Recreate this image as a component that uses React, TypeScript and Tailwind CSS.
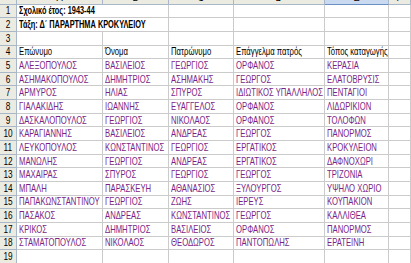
import { Fragment } from 'react'

const cols = ['A', 'B', 'C', 'D', 'E', 'F']

const rows: string[][] = [
  ['ΑΛΕΞΟΠΟΥΛΟΣ', 'ΒΑΣΙΛΕΙΟΣ', 'ΓΕΩΡΓΙΟΣ', 'ΟΡΦΑΝΟΣ', 'ΚΕΡΑΣΙΑ'],
  ['ΑΣΗΜΑΚΟΠΟΥΛΟΣ', 'ΔΗΜΗΤΡΙΟΣ', 'ΑΣΗΜΑΚΗΣ', 'ΓΕΩΡΓΟΣ', 'ΕΛΑΤΟΒΡΥΣΙΣ'],
  ['ΑΡΜΥΡΟΣ', 'ΗΛΙΑΣ', 'ΣΠΥΡΟΣ', 'ΙΔΙΩΤΙΚΟΣ ΥΠΑΛΛΗΛΟΣ', 'ΠΕΝΤΑΓΙΟΙ'],
  ['ΓΙΑΛΑΚΙΔΗΣ', 'ΙΩΑΝΝΗΣ', 'ΕΥΑΓΓΕΛΟΣ', 'ΟΡΦΑΝΟΣ', 'ΛΙΔΩΡΙΚΙΟΝ'],
  ['ΔΑΣΚΑΛΟΠΟΥΛΟΣ', 'ΓΕΩΡΓΙΟΣ', 'ΝΙΚΟΛΑΟΣ', 'ΟΡΦΑΝΟΣ', 'ΤΟΛΟΦΩΝ'],
  ['ΚΑΡΑΓΙΑΝΝΗΣ', 'ΒΑΣΙΛΕΙΟΣ', 'ΑΝΔΡΕΑΣ', 'ΓΕΩΡΓΟΣ', 'ΠΑΝΟΡΜΟΣ'],
  ['ΛΕΥΚΟΠΟΥΛΟΣ', 'ΚΩΝΣΤΑΝΤΙΝΟΣ', 'ΓΕΩΡΓΙΟΣ', 'ΕΡΓΑΤΙΚΟΣ', 'ΚΡΟΚΥΛΕΙΟΝ'],
  ['ΜΑΝΩΛΗΣ', 'ΓΕΩΡΓΙΟΣ', 'ΑΝΔΡΕΑΣ', 'ΕΡΓΑΤΙΚΟΣ', 'ΔΑΦΝΟΧΩΡΙ'],
  ['ΜΑΧΑΙΡΑΣ', 'ΣΠΥΡΟΣ', 'ΓΕΩΡΓΙΟΣ', 'ΓΕΩΡΓΟΣ', 'ΤΡΙΖΟΝΙΑ'],
  ['ΜΠΑΛΗ', 'ΠΑΡΑΣΚΕΥΗ', 'ΑΘΑΝΑΣΙΟΣ', 'ΞΥΛΟΥΡΓΟΣ', 'ΥΨΗΛΟ ΧΩΡΙΟ'],
  ['ΠΑΠΑΚΩΝΣΤΑΝΤΙΝΟΥ', 'ΓΕΩΡΓΙΟΣ', 'ΖΩΗΣ', 'ΙΕΡΕΥΣ', 'ΚΟΥΠΑΚΙΟΝ'],
  ['ΠΑΣΑΚΟΣ', 'ΑΝΔΡΕΑΣ', 'ΚΩΝΣΤΑΝΤΙΝΟΣ', 'ΓΕΩΡΓΟΣ', 'ΚΑΛΛΙΘΕΑ'],
  ['ΚΡΙΚΟΣ', 'ΔΗΜΗΤΡΙΟΣ', 'ΒΑΣΙΛΕΙΟΣ', 'ΟΡΦΑΝΟΣ', 'ΠΑΝΟΡΜΟΣ'],
  ['ΣΤΑΜΑΤΟΠΟΥΛΟΣ', 'ΝΙΚΟΛΑΟΣ', 'ΘΕΟΔΩΡΟΣ', 'ΠΑΝΤΟΠΩΛΗΣ', 'ΕΡΑΤΕΙΝΗ'],
]

const headers = ['Επώνυμο', 'Όνομα', 'Πατρώνυμο', 'Επάγγελμα πατρός', 'Τόπος καταγωγής']

// one sheet row: row number + 6 cells
type Cell = { text?: string; bold?: boolean; purple?: boolean; spill?: boolean }

function Txt({ c }: { c: Cell }) {
  if (!c.text) return null
  return (
    <span
      className={`inline-block origin-left ${c.bold ? 'scale-x-[0.67] font-bold' : 'scale-x-[0.7]'} ${
        c.purple ? 'text-[#7a1f86]' : 'text-black'
      }`}
    >
      {c.text}
    </span>
  )
}

function SheetRow({ n, cells }: { n: number; cells: Cell[] }) {
  return (
    <>
      <div className="flex items-center justify-center border-r border-b border-[#a9b8c9] bg-[#ecebe2] text-black">
        <span className="inline-block scale-x-[0.75]">{n}</span>
      </div>
      {cells.map((c, i) => (
        <div
          key={i}
          className={`relative flex items-center whitespace-nowrap border-b border-[#cbcbcb] bg-white pl-[2px] ${
            c.spill ? 'z-10 overflow-visible' : 'overflow-hidden border-r'
          }`}
        >
          <Txt c={c} />
        </div>
      ))}
    </>
  )
}

export default function App() {
  const empty: Cell[] = [{}, {}, {}, {}, {}, {}]
  return (
    <div className="h-[263px] w-[411px] overflow-hidden bg-white font-['Liberation_Sans',Arial,sans-serif] text-[11px] leading-none">
      <div className="-mt-[9px] grid grid-cols-[17px_86px_66px_65px_91px_64px_1fr] auto-rows-[13.65px]">
        {/* column headers, cropped at the top */}
        <div className="border-r border-b border-[#a9b8c9] bg-[#ecebe2]" />
        {cols.map((l) => (
          <div
            key={l}
            className={`flex items-center justify-center border-r border-b ${
              l === 'E'
                ? 'border-[#a9b8c9] border-b-[#6b8fc2] bg-[#c9d9ef]'
                : 'border-[#a9b8c9] bg-[#ecebe2]'
            }`}
          >
            <span className="inline-block scale-x-[0.85]">{l}</span>
          </div>
        ))}

        <SheetRow n={1} cells={[{ text: 'Σχολικό έτος: 1943-44', bold: true, spill: true }, {}, {}, {}, {}, {}]} />
        <SheetRow
          n={2}
          cells={[{ text: 'Τάξη: Δ΄ ΠΑΡΑΡΤΗΜΑ ΚΡΟΚΥΛΕΙΟΥ', bold: true, spill: true }, {}, {}, {}, {}, {}]}
        />
        <SheetRow n={3} cells={empty} />
        <SheetRow n={4} cells={[...headers.map((h) => ({ text: h })), {}]} />
        {rows.map((r, i) => (
          <Fragment key={i}>
            <SheetRow n={i + 5} cells={[...r.map((t) => ({ text: t, purple: true })), {}]} />
          </Fragment>
        ))}
        <SheetRow n={19} cells={empty} />
      </div>
    </div>
  )
}
